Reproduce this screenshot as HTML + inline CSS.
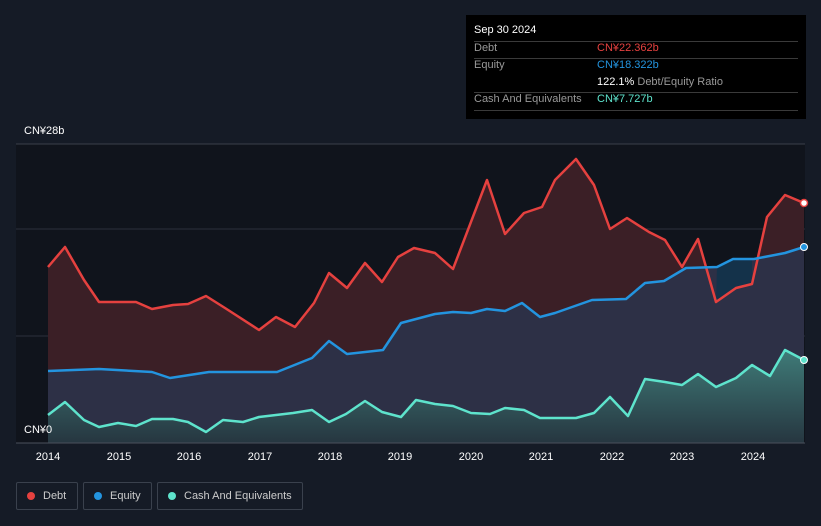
<!DOCTYPE html>
<html><head><meta charset="utf-8"><style>
body{margin:0;width:821px;height:526px;background:#151b26;font-family:"Liberation Sans","Noto Sans CJK SC",sans-serif;overflow:hidden;position:relative}
.t{position:absolute;font-size:11px;color:#fff}
.tip{position:absolute;left:466px;top:15px;width:340px;height:104px;background:#000}
.tip div{position:absolute;font-size:11px}
.ln{position:absolute;left:8px;width:324px;height:1px;background:#3a3a3a}
.lg{position:absolute;top:482px;height:28px;border:1px solid #3a414d;border-radius:2px;box-sizing:border-box;font-size:11px;color:#ccc;line-height:26px}
.dot{display:inline-block;width:8px;height:8px;border-radius:50%;margin:0 8px 0 10px;vertical-align:-1px}
</style></head><body>
<svg width="821" height="526" style="position:absolute;left:0;top:0">
<defs><linearGradient id="cg" x1="0" y1="0" x2="0" y2="1"><stop offset="0" stop-color="#3f7b78"/><stop offset="1" stop-color="#263640"/></linearGradient></defs>
<rect x="16" y="144" width="789" height="299" fill="#10141c"/>
<line x1="16" y1="144" x2="805" y2="144" stroke="#3a3f4a"/>
<line x1="16" y1="229" x2="805" y2="229" stroke="#2c313b"/>
<line x1="16" y1="336" x2="805" y2="336" stroke="#2c313b"/>
<polygon fill="#3b1f26" points="48,443 48,267 65,247 84,280 99,302 136,302 152,309 173,305 188,304 206,296 225,308 259,330 276,317 295,327 314,303 329,273 347,288 365,263 382,282 398,257 414,248 435,253 453,269 487,180 505,234 524,213 542,207 555,180 576,159 594,185 610,229 627,218 649,232 665,240 682,267 698,239 716,302 736,288 752,284 767,217 785,195 804,203 804,443"/>
<polygon fill="#2d3046" points="48,443 48,371 99,369 152,372 170,378 209,372 277,372 312,358 329,341 347,354 383,350 401,323 435,314 453,312 471,313 487,309 505,311 522,303 540,317 555,313 592,300 626,299 645,283 664,281 686,268 717,267 733,259 754,259 785,253 804,247 804,443"/>
<polygon fill="#14324a" points="716,302 717,267 733,259 752,259 752,284 736,288"/>
<polygon fill="url(#cg)" points="48,443 48,415 65,402 84,420 99,427 118,423 136,426 152,419 173,419 188,422 206,432 223,420 243,422 259,417 293,413 312,410 329,422 346,414 365,401 382,412 401,417 416,400 435,404 453,406 471,413 490,414 505,408 524,410 540,418 576,418 594,413 610,397 628,416 645,379 665,382 682,385 698,374 716,387 736,378 752,365 770,376 785,350 804,360 804,443"/>
<line x1="16" y1="443" x2="805" y2="443" stroke="#4a505c"/>
<g fill="none" stroke-width="2.5" stroke-linejoin="round">
<polyline stroke="#e5413f" points="48,267 65,247 84,280 99,302 136,302 152,309 173,305 188,304 206,296 225,308 259,330 276,317 295,327 314,303 329,273 347,288 365,263 382,282 398,257 414,248 435,253 453,269 487,180 505,234 524,213 542,207 555,180 576,159 594,185 610,229 627,218 649,232 665,240 682,267 698,239 716,302 736,288 752,284 767,217 785,195 804,203"/>
<polyline stroke="#2394df" points="48,371 99,369 152,372 170,378 209,372 277,372 312,358 329,341 347,354 383,350 401,323 435,314 453,312 471,313 487,309 505,311 522,303 540,317 555,313 592,300 626,299 645,283 664,281 686,268 717,267 733,259 754,259 785,253 804,247"/>
<polyline stroke="#5ee3cc" points="48,415 65,402 84,420 99,427 118,423 136,426 152,419 173,419 188,422 206,432 223,420 243,422 259,417 293,413 312,410 329,422 346,414 365,401 382,412 401,417 416,400 435,404 453,406 471,413 490,414 505,408 524,410 540,418 576,418 594,413 610,397 628,416 645,379 665,382 682,385 698,374 716,387 736,378 752,365 770,376 785,350 804,360"/>
</g>
<circle cx="804" cy="203" r="3.5" fill="#fff" stroke="#e5413f" stroke-width="1.5"/>
<circle cx="804" cy="247" r="3.5" fill="#2394df" stroke="#fff" stroke-width="1"/>
<circle cx="804" cy="360" r="3.5" fill="#5ee3cc" stroke="#fff" stroke-width="1"/>
<g fill="#fff" font-size="11" font-family="Liberation Sans,sans-serif" text-anchor="middle">
<text x="48" y="460">2014</text><text x="119" y="460">2015</text><text x="189" y="460">2016</text><text x="260" y="460">2017</text><text x="330" y="460">2018</text><text x="400" y="460">2019</text><text x="471" y="460">2020</text><text x="541" y="460">2021</text><text x="612" y="460">2022</text><text x="682" y="460">2023</text><text x="753" y="460">2024</text>
</g>
</svg>
<div class="t" style="left:24px;top:125px">CN¥28b</div>
<div class="t" style="left:24px;top:424px">CN¥0</div>
<div class="tip">
<div style="left:8px;top:9px;color:#fff">Sep 30 2024</div>
<div class="ln" style="top:26px"></div>
<div style="left:8px;top:27px;color:#999">Debt</div><div style="left:131px;top:27px;color:#e5413f">CN¥22.362b</div>
<div class="ln" style="top:43px"></div>
<div style="left:8px;top:44px;color:#999">Equity</div><div style="left:131px;top:44px;color:#2394df">CN¥18.322b</div>
<div style="left:131px;top:61px;color:#999"><span style="color:#fff">122.1%</span> Debt/Equity Ratio</div>
<div class="ln" style="top:77px"></div>
<div style="left:8px;top:78px;color:#999">Cash And Equivalents</div><div style="left:131px;top:78px;color:#5ee3cc">CN¥7.727b</div>
<div class="ln" style="top:95px"></div>
</div>
<div class="lg" style="left:16px;width:62px"><span class="dot" style="background:#e5413f"></span>Debt</div>
<div class="lg" style="left:83px;width:69px"><span class="dot" style="background:#2394df"></span>Equity</div>
<div class="lg" style="left:157px;width:146px"><span class="dot" style="background:#5ee3cc"></span>Cash And Equivalents</div>
</body></html>
